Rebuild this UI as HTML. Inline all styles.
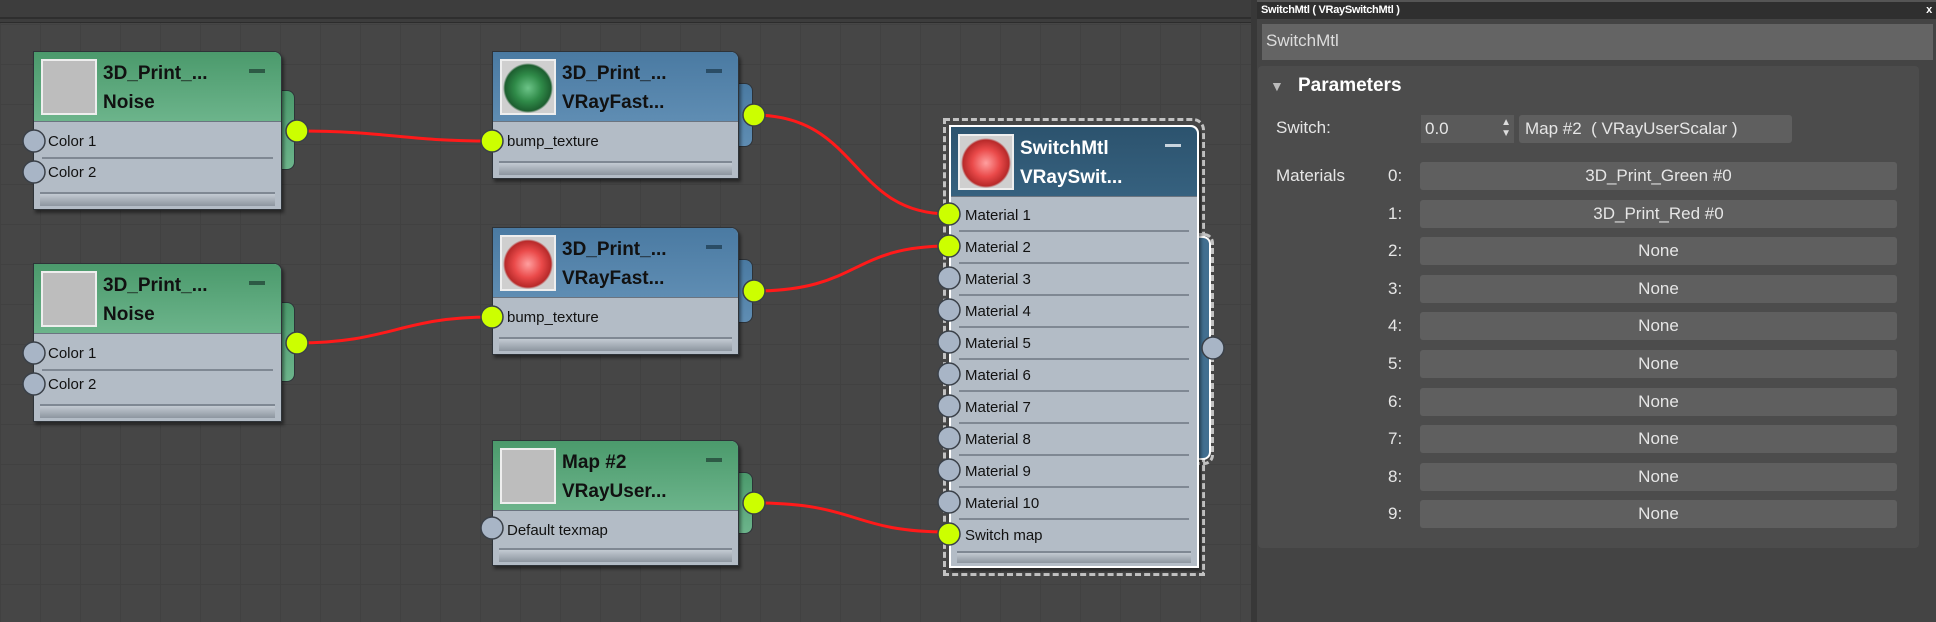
<!DOCTYPE html>
<html><head><meta charset="utf-8"><style>
*{margin:0;padding:0;box-sizing:border-box}
body{width:1936px;height:622px;overflow:hidden;background:#464646;font-family:"Liberation Sans",sans-serif;position:relative}
#ed{position:absolute;left:0;top:0;width:1251px;height:622px;background-color:#464646;
background-image:linear-gradient(#414141 1px,transparent 1px),linear-gradient(90deg,#414141 1px,transparent 1px);background-size:40px 40px;background-position:0 24px}
.topbar{position:absolute;left:0;top:0;width:1251px;height:23px;background:#3d3d3d;border-bottom:1px solid #2c2c2c}
.topbar:after{content:"";position:absolute;left:0;top:17px;width:100%;height:2px;background:#2e2e2e}
.node{position:absolute;background:#b3bcc6;border:1px solid #2e3338;border-radius:0 8px 0 0;box-shadow:2px 3px 3px rgba(0,0,0,.45)}
.hdr{position:absolute;left:0;top:0;right:0;height:70px;border-bottom:1px solid #6b7480;border-radius:0 7px 0 0}
.g{background:linear-gradient(#4b9a6c,#6cb48b)}
.b{background:linear-gradient(#4a7aa2,#5f8db3)}
.d{background:linear-gradient(#2c536e,#36617f)}
.th{position:absolute;left:7px;top:7px;width:56px;height:56px;border:2px solid #eee;background:#bdbdbd}
.t{position:absolute;left:69px;font-weight:bold;font-size:19px;color:#111;white-space:nowrap}
.w .t{color:#fff}
.min{position:absolute;right:16px;top:17px;width:16px;height:4px;background:#2d5a45}
.b .min{background:#2a4d66}.d .min{background:#c8d4de;height:3px}
.row{position:absolute;left:14px;font-size:15px;color:#111}
.sep{position:absolute;left:8px;right:8px;height:2px;background:#7f8893}
.foot{position:absolute;left:6px;right:6px;bottom:3px;height:14px;background:linear-gradient(#c3cad2,#8d96a0);border-top:2px solid #7f8893}
.tab{position:absolute;border:1px solid #2e3338;border-left:none;border-radius:0 8px 8px 0}
#pn{position:absolute;left:1251px;top:0;width:685px;height:622px;background:#444;border-left:6px solid #383838}
.ttl{position:absolute;left:0;top:0;right:0;height:19px;background:#2f2f2f;border-top:2px solid #555;color:#fff;font-size:11px;font-weight:bold;padding:2px 4px;letter-spacing:-.3px}
.nm{position:absolute;left:5px;top:24px;width:671px;height:36px;background:#646464;color:#ddd;font-size:17px;padding:7px 4px}
.ro{position:absolute;left:1px;top:66px;width:661px;height:482px;background:#4c4c4c;border-radius:4px}
.lbl{position:absolute;color:#e6e6e6;font-size:17px;white-space:nowrap}
.btn{position:absolute;left:162px;width:477px;height:28px;background:#5f5f5f;border-radius:3px;color:#e6e6e6;font-size:17px;text-align:center;line-height:28px}
.idx{position:absolute;left:130px;color:#e6e6e6;font-size:17px}
.sg{background:radial-gradient(circle closest-side at 50% 52%,var(--a) 0,var(--b) 55%,var(--c) 92%,#cfcfcf 100%),#cfcfcf}
</style></head><body>
<div id="ed"><div class="topbar"></div>

<div class="tab g" style="left:281px;top:90px;width:14px;height:80px"></div>
<div class="node" style="left:33px;top:51px;width:249px;height:159px">
<div class="hdr g"><div class="th"></div><div class="t" style="top:11px">3D_Print_...</div><div class="t" style="top:40px">Noise</div><div class="min"></div></div>
<div class="row" style="top:81px">Color 1</div><div class="sep" style="top:105px"></div>
<div class="row" style="top:112px">Color 2</div>
<div class="foot"></div></div>

<div class="tab g" style="left:281px;top:302px;width:14px;height:80px"></div>
<div class="node" style="left:33px;top:263px;width:249px;height:159px">
<div class="hdr g"><div class="th"></div><div class="t" style="top:11px">3D_Print_...</div><div class="t" style="top:40px">Noise</div><div class="min"></div></div>
<div class="row" style="top:81px">Color 1</div><div class="sep" style="top:105px"></div>
<div class="row" style="top:112px">Color 2</div>
<div class="foot"></div></div>

<div class="tab b" style="left:738px;top:83px;width:15px;height:64px"></div>
<div class="node" style="left:492px;top:51px;width:247px;height:128px">
<div class="hdr b"><div class="th sg" style="--a:#6cc488;--b:#2f8a48;--c:#1d5f30"></div><div class="t" style="top:11px">3D_Print_...</div><div class="t" style="top:40px">VRayFast...</div><div class="min"></div></div>
<div class="row" style="top:81px">bump_texture</div>
<div class="foot"></div></div>

<div class="tab b" style="left:738px;top:259px;width:15px;height:64px"></div>
<div class="node" style="left:492px;top:227px;width:247px;height:128px">
<div class="hdr b"><div class="th sg" style="--a:#ff9f9f;--b:#ea4a4a;--c:#b82a2a"></div><div class="t" style="top:11px">3D_Print_...</div><div class="t" style="top:40px">VRayFast...</div><div class="min"></div></div>
<div class="row" style="top:81px">bump_texture</div>
<div class="foot"></div></div>

<div class="tab g" style="left:738px;top:472px;width:15px;height:62px"></div>
<div class="node" style="left:492px;top:440px;width:247px;height:126px">
<div class="hdr g"><div class="th"></div><div class="t" style="top:11px">Map #2</div><div class="t" style="top:40px">VRayUser...</div><div class="min"></div></div>
<div class="row" style="top:81px">Default texmap</div>
<div class="foot"></div></div>

<div style="position:absolute;left:943px;top:118px;width:262px;height:458px;border:3px dashed #c2c2c2;border-radius:0 12px 0 0"></div>
<div style="position:absolute;left:1196px;top:233px;width:18px;height:232px;border:3px dashed #c2c2c2;border-left:none;border-radius:0 10px 10px 0"></div>
<div class="tab d" style="left:1197px;top:236px;width:14px;height:224px;background:#426f90;border:2px solid #fff;border-left:none"></div>
<div class="node w" style="left:949px;top:125px;width:250px;height:443px;border:2px solid #fff">
<div class="hdr d"><div class="th sg" style="--a:#ff9f9f;--b:#ea4a4a;--c:#b82a2a"></div><div class="t" style="top:11px">SwitchMtl</div><div class="t" style="top:40px">VRaySwit...</div><div class="min"></div></div>
<div class="row" style="top:80px">Material 1</div><div class="sep" style="top:103px"></div>
<div class="row" style="top:112px">Material 2</div><div class="sep" style="top:135px"></div>
<div class="row" style="top:144px">Material 3</div><div class="sep" style="top:167px"></div>
<div class="row" style="top:176px">Material 4</div><div class="sep" style="top:199px"></div>
<div class="row" style="top:208px">Material 5</div><div class="sep" style="top:231px"></div>
<div class="row" style="top:240px">Material 6</div><div class="sep" style="top:263px"></div>
<div class="row" style="top:272px">Material 7</div><div class="sep" style="top:295px"></div>
<div class="row" style="top:304px">Material 8</div><div class="sep" style="top:327px"></div>
<div class="row" style="top:336px">Material 9</div><div class="sep" style="top:359px"></div>
<div class="row" style="top:368px">Material 10</div><div class="sep" style="top:391px"></div>
<div class="row" style="top:400px">Switch map</div>
<div class="foot" style="height:12px"></div></div>

<svg width="1251" height="622" style="position:absolute;left:0;top:0">
<g fill="none" stroke="#ff1a1a" stroke-width="3">
<path d="M297 131 C390 131,400 141,491 141"/>
<path d="M297 343 C390 343,400 317,491 317"/>
<path d="M754 115 C860 115,850 214,949 214"/>
<path d="M754 291 C860 291,850 246,949 246"/>
<path d="M754 503 C860 503,850 532,949 532"/>
</g>
<g stroke="#3a4048" stroke-width="1.5">
<g fill="#a8b5c6">
<circle cx="34" cy="141" r="11"/><circle cx="34" cy="172" r="11"/>
<circle cx="34" cy="353" r="11"/><circle cx="34" cy="384" r="11"/>
<circle cx="492" cy="528" r="11"/>
<circle cx="949" cy="278" r="11"/><circle cx="949" cy="310" r="11"/><circle cx="949" cy="342" r="11"/><circle cx="949" cy="374" r="11"/><circle cx="949" cy="406" r="11"/><circle cx="949" cy="438" r="11"/><circle cx="949" cy="470" r="11"/><circle cx="949" cy="502" r="11"/>
<circle cx="1213" cy="348" r="11"/>
</g>
<g fill="#ccff00">
<circle cx="297" cy="131" r="11"/><circle cx="297" cy="343" r="11"/>
<circle cx="492" cy="141" r="11"/><circle cx="492" cy="317" r="11"/>
<circle cx="754" cy="115" r="11"/><circle cx="754" cy="291" r="11"/><circle cx="754" cy="503" r="11"/>
<circle cx="949" cy="214" r="11"/><circle cx="949" cy="246" r="11"/><circle cx="949" cy="534" r="11"/>
</g></g>
</svg>
</div>

<div id="pn">
<div class="ttl">SwitchMtl ( VRaySwitchMtl )<span style="position:absolute;right:4px">x</span></div>
<div class="nm">SwitchMtl</div>
<div class="ro">
<div class="lbl" style="left:12px;top:12px;color:#bbb;font-size:14px">▼</div>
<div class="lbl" style="left:40px;top:9px;font-weight:bold;font-size:19px;color:#fff">Parameters</div>
<div class="lbl" style="left:18px;top:52px">Switch:</div>
<div style="position:absolute;left:163px;top:49px;width:93px;height:28px;background:#5a5a5a;color:#e6e6e6;font-size:17px;padding:4px 4px">0.0<span style="position:absolute;right:3px;top:2px;font-size:10px;line-height:11px;color:#ddd">▲<br>▼</span></div>
<div style="position:absolute;left:261px;top:49px;width:273px;height:28px;background:#5f5f5f;border-radius:3px;color:#e6e6e6;font-size:17px;padding:4px 6px;white-space:nowrap">Map #2 &nbsp;( VRayUserScalar )</div>
<div class="lbl" style="left:18px;top:100px">Materials</div>
<div class="idx" style="top:100px">0:</div><div class="btn" style="top:96px">3D_Print_Green #0</div>
<div class="idx" style="top:138px">1:</div><div class="btn" style="top:134px">3D_Print_Red #0</div>
<div class="idx" style="top:175px">2:</div><div class="btn" style="top:171px">None</div>
<div class="idx" style="top:213px">3:</div><div class="btn" style="top:209px">None</div>
<div class="idx" style="top:250px">4:</div><div class="btn" style="top:246px">None</div>
<div class="idx" style="top:288px">5:</div><div class="btn" style="top:284px">None</div>
<div class="idx" style="top:326px">6:</div><div class="btn" style="top:322px">None</div>
<div class="idx" style="top:363px">7:</div><div class="btn" style="top:359px">None</div>
<div class="idx" style="top:401px">8:</div><div class="btn" style="top:397px">None</div>
<div class="idx" style="top:438px">9:</div><div class="btn" style="top:434px">None</div>
</div>
</div>
</body></html>
